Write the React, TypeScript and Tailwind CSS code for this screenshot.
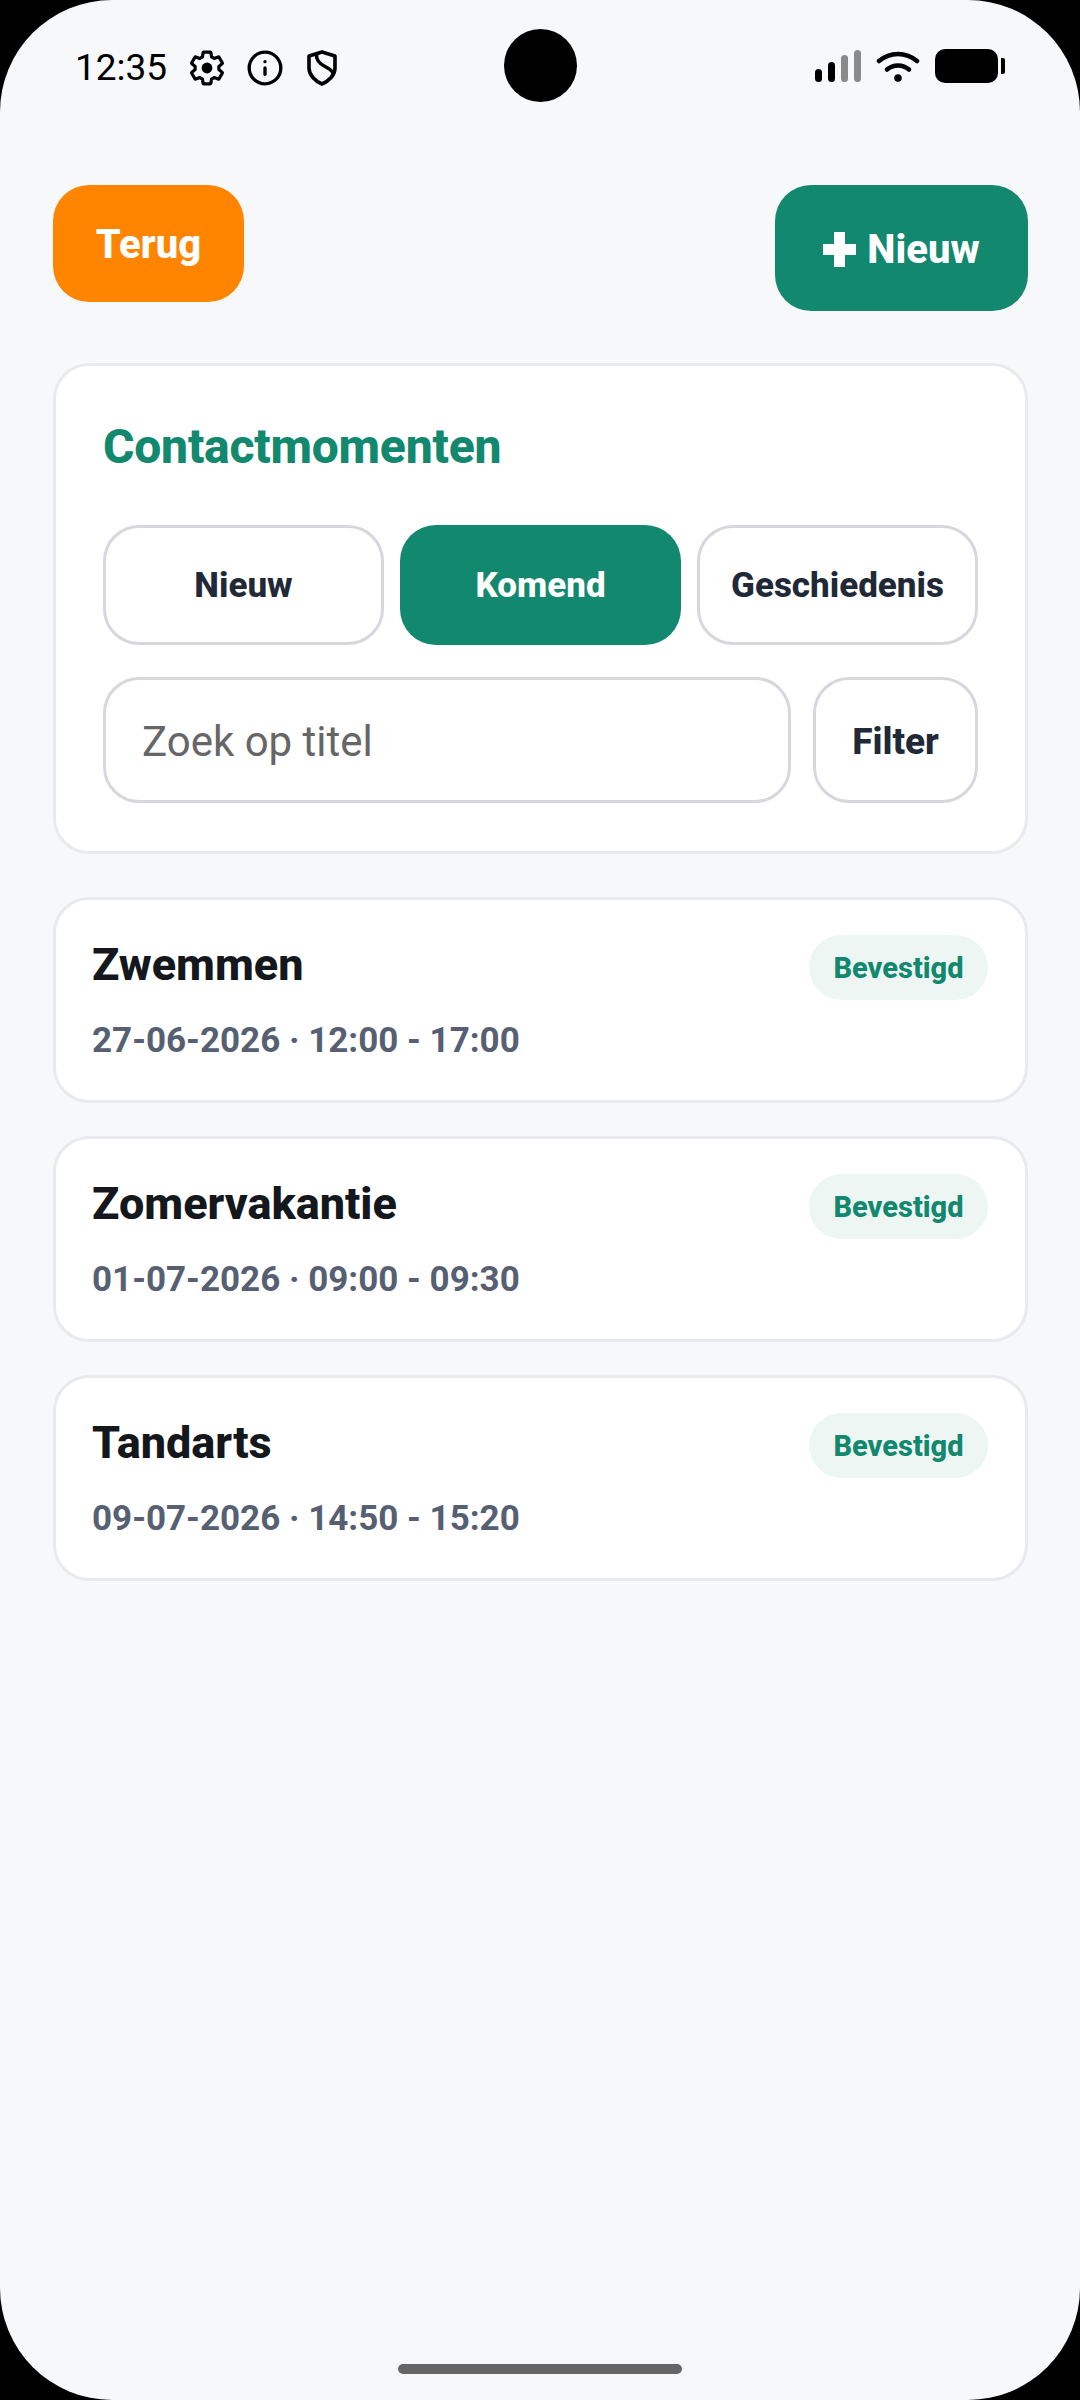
import React from 'react';
import { Info } from 'lucide-react';

const items = [
  { title: 'Zwemmen', when: '27-06-2026 · 12:00 - 17:00' },
  { title: 'Zomervakantie', when: '01-07-2026 · 09:00 - 09:30' },
  { title: 'Tandarts', when: '09-07-2026 · 14:50 - 15:20' },
];

function StatusBar() {
  return (
    <div className="relative flex h-[100px] items-start justify-between pl-[75px] pr-[75px] pt-[49px] text-black">
      <div className="flex items-center">
        <span className="text-[37px] leading-[34px]">12:35</span>
        <svg width="38" height="38" viewBox="0 0 24 24" className="ml-[21px]" fill="none" stroke="black" strokeWidth="2" strokeLinejoin="round">
          <path d="M19.43 12.98c.04-.32.07-.64.07-.98 0-.34-.03-.66-.07-.98l2.11-1.65c.19-.15.24-.42.12-.64l-2-3.46c-.12-.22-.39-.3-.61-.22l-2.49 1c-.52-.4-1.08-.73-1.69-.98l-.38-2.65C14.46 2.18 14.25 2 14 2h-4c-.25 0-.46.18-.49.42l-.38 2.65c-.61.25-1.17.59-1.69.98l-2.49-1c-.23-.09-.49 0-.61.22l-2 3.46c-.13.22-.07.49.12.64l2.11 1.65c-.04.32-.08.65-.08.98s.03.66.07.98l-2.11 1.65c-.19.15-.24.42-.12.64l2 3.46c.12.22.39.3.61.22l2.49-1c.52.4 1.08.73 1.69.98l.38 2.65c.03.24.24.42.49.42h4c.25 0 .46-.18.49-.42l.38-2.65c.61-.25 1.17-.59 1.69-.98l2.49 1c.23.09.49 0 .61-.22l2-3.46c.12-.22.07-.49-.12-.64l-2.11-1.65z" />
          <circle cx="12" cy="12" r="3.4" fill="black" stroke="none" />
        </svg>
        <Info size={38} strokeWidth={2.1} className="ml-[20px]" />
        <svg width="30" height="36" viewBox="0 0 30 36" className="ml-[23px]" fill="none" stroke="black" strokeWidth="3.6" strokeLinejoin="round">
          <path d="M15 2 L28 6 V18 C28 25 22 31 15 34 C8 31 2 25 2 18 V6 Z" />
          <path d="M9.5 4 C9 11 13 14 18 16.5 C23 19 24.5 20 26 23" />
        </svg>
      </div>
      {/* camera cutout */}
      <div className="absolute left-[504px] top-[29px] h-[73px] w-[73px] rounded-full bg-black" />
      <div className="flex items-start">
        <div className="mt-[1px] flex items-end gap-[6px]">
          <div className="h-[13px] w-[7px] rounded-full bg-black" />
          <div className="h-[20px] w-[7px] rounded-full bg-black" />
          <div className="h-[27px] w-[7px] rounded-full bg-[#8a8a8a]" />
          <div className="h-[32px] w-[7px] rounded-full bg-[#8a8a8a]" />
        </div>
        <svg width="44" height="33" viewBox="0 0 44 33" className="ml-[15px] mt-[1px]" fill="none" stroke="black" strokeWidth="4.5" strokeLinecap="round">
          <path d="M3 11 C14 1.5 30 1.5 41 11" />
          <path d="M11 19.5 C17 14 27 14 33 19.5" />
          <circle cx="22" cy="28" r="3.8" fill="black" stroke="none" />
        </svg>
        <div className="ml-[15px] h-[34px] w-[63px] rounded-[10px] bg-black" />
        <div className="ml-[3px] mt-[9px] h-[16px] w-[4px] rounded-r-[2px] bg-black" />
      </div>
    </div>
  );
}

export default function App() {
  return (
    <div className="bg-black" style={{ fontFamily: 'Roboto, sans-serif' }}>
      <div className="flex h-[2400px] flex-col rounded-[112px] bg-[#f7f8fa]">
        <StatusBar />
        <div className="pl-[53px] pr-[52px] pt-[85px]">
          <div className="flex items-start justify-between">
            <button className="h-[117px] w-[191px] rounded-[36px] bg-[#ff8500] pt-[2px] text-[40px] font-extrabold text-white">Terug</button>
            <button className="flex h-[126px] w-[253px] items-center justify-center gap-[11px] rounded-[36px] bg-[#12886f] pt-[3px] text-[40px] font-extrabold text-white">
              <svg width="33" height="35" viewBox="0 0 33 35" fill="white">
                <path d="M11 0h11v12h11v11H22v12H11V23H0V12h11z" />
              </svg>
              Nieuw
            </button>
          </div>

          <div className="mt-[52px] rounded-[36px] border-[3px] border-[#e9eaed] bg-white px-[47px] pb-[48px] pt-[51px]">
            <h1 className="text-[48px] font-extrabold leading-[60px] tracking-[-0.2px] text-[#12886f]">Contactmomenten</h1>
            <div className="mt-[48px] grid grid-cols-3 gap-[16px]">
              <button className="h-[120px] rounded-[36px] border-[3px] border-[#d6d8dd] bg-white pt-[2px] text-[35px] font-extrabold text-[#1f2937]">Nieuw</button>
              <button className="h-[120px] rounded-[36px] bg-[#12886f] pt-[2px] text-[35px] font-extrabold text-white">Komend</button>
              <button className="h-[120px] rounded-[36px] border-[3px] border-[#d6d8dd] bg-white pt-[2px] text-[35px] font-extrabold text-[#1f2937]">Geschiedenis</button>
            </div>
            <div className="mt-[32px] flex gap-[22px]">
              <input
                placeholder="Zoek op titel"
                className="h-[126px] min-w-0 flex-1 rounded-[36px] border-[3px] border-[#d6d8dd] bg-white pl-[36px] pr-[36px] pt-[3px] text-[42px] outline-none placeholder:text-[#666666]"
              />
              <button className="h-[126px] w-[165px] rounded-[36px] border-[3px] border-[#d6d8dd] bg-white pt-[3px] text-[37px] font-extrabold text-[#1f2937]">Filter</button>
            </div>
          </div>

          <div className="mt-[43px] flex flex-col gap-[33px]">
            {items.map((item) => (
              <div key={item.title} className="flex h-[206px] items-start justify-between rounded-[36px] border-[3px] border-[#e9eaed] bg-white pl-[36px] pr-[37px] pt-[35px]">
                <div>
                  <div className="text-[45px] font-extrabold leading-[60px] text-[#14171c]">{item.title}</div>
                  <div className="mt-[22px] text-[35px] font-bold leading-[48px] text-[#566072]">{item.when}</div>
                </div>
                <div className="flex h-[65px] w-[179px] items-center justify-center rounded-full bg-[#eef6f3] pt-[2px] text-[29px] font-extrabold text-[#12886f]">Bevestigd</div>
              </div>
            ))}
          </div>
        </div>
        <div className="mx-auto mb-[26px] mt-auto h-[10px] w-[284px] rounded-full bg-[#666666]" />
      </div>
    </div>
  );
}
